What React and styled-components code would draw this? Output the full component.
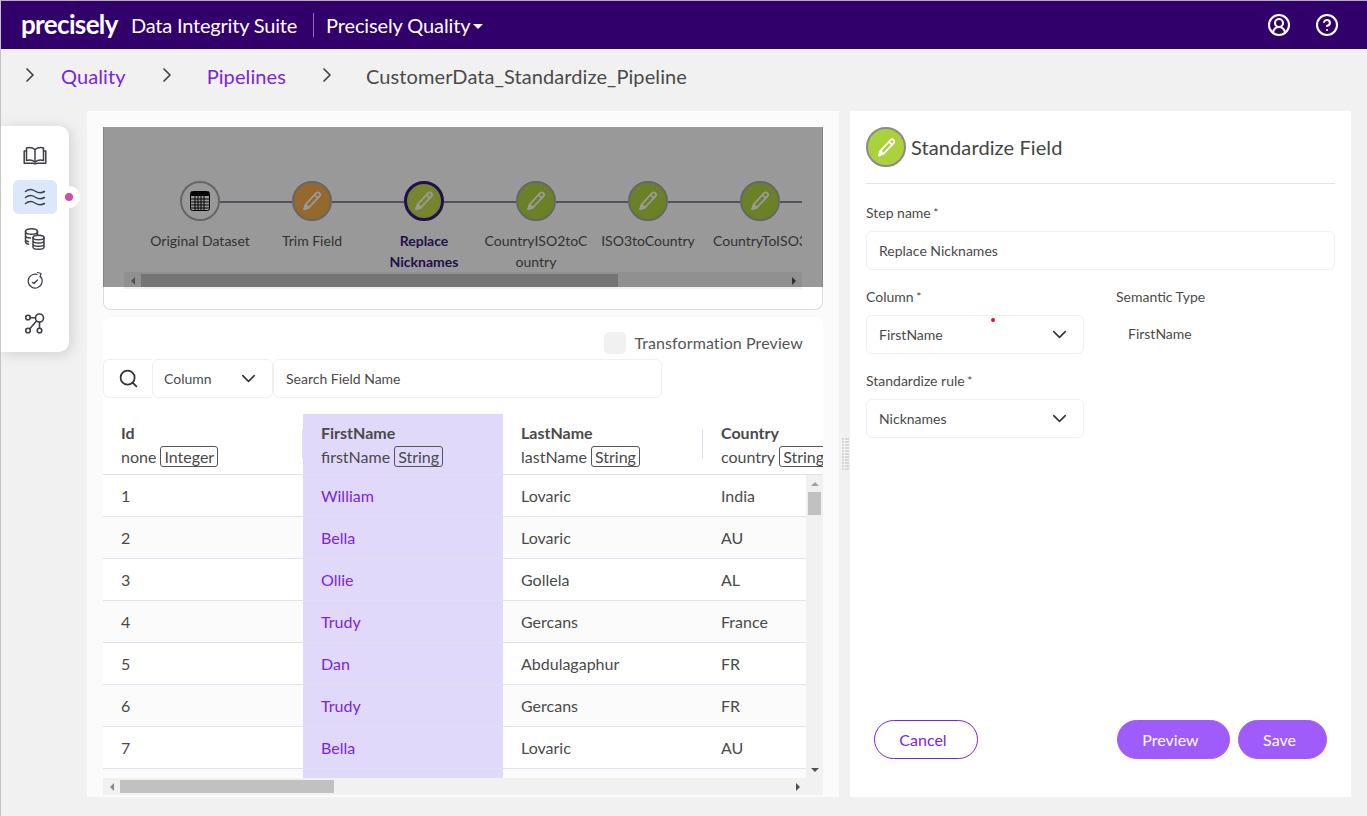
import React from "react";
import styled, { createGlobalStyle } from "styled-components";
import { ChevronDown, ChevronRight, CircleHelp, CircleUserRound, Search } from "lucide-react";

const Global = createGlobalStyle`
  html, body { margin: 0; padding: 0; height: 100%; overflow: hidden; background: #f1f1f1; }
  body { font-family: Lato, "Liberation Sans", sans-serif; color: #444; }
  * { box-sizing: border-box; }
`;

const Page = styled.div`
  position: relative;
  width: 1367px;
  height: 816px;
  display: flex;
  flex-direction: column;
  border-top: 1px solid #b4b4b4;
  border-left: 1px solid #c4c4c4;
  overflow: hidden;
`;
const Header = styled.header`
  height: 48px;
  flex: none;
  display: flex;
  align-items: center;
  background: #32006a;
  color: #fff;
  padding: 0 28px 0 20px;
`;
const Logo = styled.span`
  font-size: 26px;
  font-weight: 700;
  letter-spacing: -0.65px;
  line-height: 1;
  width: 110px;
  margin-top: -2px;
`;
const Suite = styled.span`
  font-size: 20px;
  font-weight: 400;
  line-height: 24px;
  letter-spacing: ${(p) => p.$track}px;
`;
const HeadDivider = styled.span`
  width: 1px;
  height: 24px;
  background: #8d73ad;
  margin: 0 12px 0 16px;
`;
const Caret = styled.span`
  width: 0;
  height: 0;
  margin: 3px 0 0 3px;
  border-left: 5px solid transparent;
  border-right: 5px solid transparent;
  border-top: 5px solid #fff;
`;
const HeadIcons = styled.div`
  margin-left: auto;
  display: flex;
  gap: 24px;
`;
const Breadcrumb = styled.nav`
  height: 62px;
  flex: none;
  display: flex;
  align-items: center;
  padding: 0 0 8px 17px;
  font-size: 20px;
  letter-spacing: 0.1px;
  color: #4a4a4a;
`;
const CrumbChevron = styled(ChevronRight)`
  color: #444;
  margin-right: ${(p) => p.$gap}px;
  margin-top: -2px;
`;
const CrumbLink = styled.a`
  color: #7a25dd;
  margin-right: 29px;
`;
const Main = styled.main`
  flex: 1;
  min-height: 0;
  display: flex;
  gap: 11px;
  padding: 0 15px 19px 86px;
`;
const LeftPanel = styled.section`
  width: 752px;
  display: flex;
  flex-direction: column;
  gap: 7px;
  background: #fbfbfb;
  padding: 16px 16px 2px;
`;
const FlowCard = styled.div`
  position: relative;
  height: 183px;
  flex: none;
  background: #fff;
  border: 1px solid #dcdcdc;
  border-top: none;
  border-radius: 0 0 8px 8px;
  padding: 0 20px;
`;
const FlowViewport = styled.div`
  height: 145px;
  overflow: hidden;
  display: flex;
  padding: 54px 0 0 20px;
`;
const Step = styled.div`
  width: 112px;
  flex: none;
  display: flex;
  flex-direction: column;
  align-items: center;
`;
const StepTrack = styled.div`
  width: 100%;
  display: flex;
  align-items: center;
`;
const Connector = styled.span`
  flex: 1;
  height: 2px;
  margin-top: 1px;
  background: ${(p) => (p.$hidden ? "transparent" : "#8e8696")};
`;
const Circle = styled.span`
  width: 40px;
  height: 40px;
  flex: none;
  border-radius: 50%;
  display: flex;
  align-items: center;
  justify-content: center;
  border: 2px solid ${(p) => (p.$active ? "#3a1a80" : "#aaa")};
  background: ${(p) =>
    p.$kind === "data"
      ? "#fff"
      : p.$kind === "trim"
      ? "#f8ad4a"
      : p.$active
      ? "radial-gradient(circle, #c6e04e 55%, #b0cc68 100%)"
      : "#b4d63e"};
  ${(p) => p.$active && "border-width: 3px;"}
`;
const StepLabel = styled.div`
  margin-top: 9px;
  width: 106px;
  flex: none;
  text-align: center;
  font-size: 14px;
  line-height: 21px;
  overflow-wrap: anywhere;
  color: ${(p) => (p.$active ? "#3a1a80" : "#555")};
  font-weight: ${(p) => (p.$active ? 700 : 400)};
`;
const HBar = styled.div`
  height: 17px;
  flex: none;
  display: flex;
  align-items: center;
  background: #f1f1f1;
`;
const ArrowSlot = styled.span`
  width: 17px;
  flex: none;
  display: flex;
  justify-content: center;
`;
const ArrowH = styled.span`
  width: 0;
  height: 0;
  border-top: 4px solid transparent;
  border-bottom: 4px solid transparent;
  ${(p) =>
    p.$dir === "left" ? "border-right: 4px solid #888;" : "border-left: 4px solid #505050;"}
`;
const HThumb = styled.span`
  height: 13px;
  width: ${(p) => p.$w}px;
  background: #c1c1c1;
`;
const Spacer = styled.span`
  flex: 1;
`;
const Overlay = styled.div`
  position: absolute;
  left: -1px;
  right: -1px;
  top: 0;
  height: 160px;
  background: rgba(0, 0, 0, 0.4);
`;
const TableCard = styled.div`
  flex: 1;
  min-height: 0;
  display: flex;
  flex-direction: column;
  background: #fff;
  border-radius: 8px 8px 0 0;
`;
const PreviewRow = styled.div`
  display: flex;
  justify-content: flex-end;
  align-items: center;
  gap: 8px;
  padding: 15px 20px 0 0;
  font-size: 16px;
  letter-spacing: 0.1px;
  line-height: 22px;
  color: #555;
`;
const Check = styled.span`
  width: 22px;
  height: 22px;
  border-radius: 5px;
  background: #f1f1f1;
`;
const SearchRow = styled.div`
  display: flex;
  margin-top: 5px;
  height: 39px;
  flex: none;
`;
const Boxed = styled.div`
  height: 39px;
  display: flex;
  align-items: center;
  background: #fff;
  border: 1px solid #f0f0f0;
  border-radius: 6px;
  font-size: 14px;
  color: #4a4a4a;
  width: ${(p) => p.$w}px;
  padding: 0 12px 0 ${(p) => p.$pl ?? 12}px;
  justify-content: space-between;
`;
const SearchBox = styled(Boxed)`
  padding: 0;
  justify-content: center;
  border-right: none;
  border-radius: 6px 0 0 6px;
`;
const TableHead = styled.div`
  margin-top: 16px;
  height: 61px;
  flex: none;
  display: grid;
  grid-template-columns: repeat(4, 200px);
  overflow: hidden;
  border-bottom: 1px solid #dfe1ee;
`;
const HeadCell = styled.div`
  position: relative;
  padding: 9px 0 0 18px;
  white-space: nowrap;
  background: ${(p) => (p.$hl ? "#e1d9f9" : "transparent")};
  ${(p) =>
    p.$sep &&
    `&::after { content: ""; position: absolute; right: 0; top: 15px; height: 30px; width: 1px; background: #dfe1ee; }`}
`;
const HeadTitle = styled.div`
  font-size: 16px;
  font-weight: 700;
  line-height: 20px;
  color: #4a4a4a;
`;
const HeadSub = styled.div`
  font-size: 16px;
  line-height: 21px;
  margin-top: 3px;
  color: #4a4a4a;
  display: flex;
  align-items: center;
  gap: 4px;
`;
const TypeTag = styled.span`
  border: 1px solid #555;
  border-radius: 3px;
  padding: 0 3px;
  line-height: 19px;
  height: 21px;
`;
const TableBodyWrap = styled.div`
  flex: 1;
  min-height: 0;
  display: flex;
`;
const TableBody = styled.div`
  flex: 1;
  min-width: 0;
  overflow: hidden;
`;
const Row = styled.div`
  height: 42px;
  display: grid;
  grid-template-columns: repeat(4, 200px);
  border-bottom: 1px solid #dfe1ee;
  background: ${(p) => (p.$even ? "#fbfbfb" : "#fff")};
`;
const Cell = styled.div`
  display: flex;
  align-items: center;
  padding-left: 18px;
  font-size: 16px;
  color: ${(p) => (p.$hl ? "#7a25dd" : "#4a4a4a")};
  background: ${(p) => (p.$hl ? "#e1d9f9" : "transparent")};
`;
const VBar = styled.div`
  width: 17px;
  flex: none;
  display: flex;
  flex-direction: column;
  align-items: center;
  background: #f1f1f1;
  padding-top: 7px;
  padding-bottom: 6px;
`;
const ArrowV = styled.span`
  width: 0;
  height: 0;
  flex: none;
  border-left: 4px solid transparent;
  border-right: 4px solid transparent;
  ${(p) =>
    p.$dir === "up" ? "border-bottom: 4px solid #a0a0a0;" : "border-top: 4px solid #505050;"}
`;
const VThumb = styled.span`
  width: 13px;
  height: 23px;
  margin-top: 6px;
  flex: none;
  background: #c1c1c1;
`;
const RightPanel = styled.aside`
  width: 501px;
  display: flex;
  flex-direction: column;
  background: #fff;
  padding: 16px 16px 38px;
`;
const PanelTitleRow = styled.div`
  display: flex;
  align-items: center;
  gap: 5px;
  padding-bottom: 16px;
  border-bottom: 1px solid #e3e3e3;
`;
const PanelIcon = styled.span`
  width: 40px;
  height: 40px;
  border-radius: 50%;
  background: #a9d23c;
  border: 2px solid #8a8a8a;
  display: flex;
  align-items: center;
  justify-content: center;
`;
const PanelTitle = styled.h2`
  margin: 0;
  font-size: 20px;
  font-weight: 400;
  letter-spacing: 0.1px;
  color: #444;
`;
const Field = styled.div`
  margin-top: ${(p) => p.$mt ?? 18}px;
`;
const FieldLabel = styled.label`
  display: block;
  font-size: 14px;
  line-height: 17px;
  color: #4a4a4a;
  margin-bottom: 10px;
`;
const Req = styled.span`
  font-size: 12px;
  margin-left: -1px;
  vertical-align: 1px;
`;
const FieldBox = styled.div`
  position: relative;
  height: 39px;
  display: flex;
  align-items: center;
  justify-content: space-between;
  border: 1px solid #f0f0f0;
  border-radius: 6px;
  padding: 0 12px;
  font-size: 14px;
  color: #4a4a4a;
`;
const RedDot = styled.span`
  position: absolute;
  left: 124px;
  top: 2px;
  width: 4px;
  height: 4px;
  border-radius: 50%;
  background: #e0102a;
`;
const TwoCols = styled.div`
  display: grid;
  grid-template-columns: 218px 1fr;
  column-gap: 32px;
`;
const PlainValue = styled.div`
  height: 39px;
  display: flex;
  align-items: center;
  padding: 0 0 2px 12px;
  font-size: 14px;
  color: #4a4a4a;
`;
const Actions = styled.div`
  margin-top: auto;
  display: flex;
  gap: 8px;
  padding: 0 8px;
`;
const Button = styled.button`
  height: 39px;
  width: ${(p) => p.$w}px;
  margin-right: ${(p) => (p.$push ? "auto" : "0")};
  padding: 0 6px 0 0;
  border-radius: 20px;
  font: 400 16px Lato, "Liberation Sans", sans-serif;
  border: 1px solid #7a25dd;
  background: ${(p) => (p.$outline ? "#fff" : "#a05cfa")};
  border-color: ${(p) => (p.$outline ? "#7a25dd" : "#a05cfa")};
  color: ${(p) => (p.$outline ? "#7a25dd" : "#fff")};
`;
const Rail = styled.div`
  position: absolute;
  left: 0;
  top: 125px;
  width: 68px;
  height: 226px;
  background: #fff;
  border-radius: 0 10px 10px 0;
  box-shadow: 2px 2px 14px rgba(0, 0, 0, 0.14);
  display: flex;
  flex-direction: column;
  align-items: center;
  padding: 8px 0 0 0;
  gap: 1px;
`;
const RailItem = styled.span`
  width: 44px;
  height: ${(p) => (p.$active ? 34 : 41)}px;
  margin: ${(p) => (p.$active ? "4px 0 3px" : "0")};
  display: flex;
  align-items: center;
  justify-content: center;
  border-radius: 6px;
  background: ${(p) => (p.$active ? "#dbe7fb" : "transparent")};
`;
const RailBump = styled.span`
  position: absolute;
  left: 57px;
  top: 60px;
  width: 22px;
  height: 22px;
  border-radius: 50%;
  background: #fff;
  display: flex;
  align-items: center;
  justify-content: center;
`;
const RailDot = styled.span`
  width: 8px;
  height: 8px;
  border-radius: 50%;
  background: #d04ea6;
`;
const Grip = styled.div`
  position: absolute;
  left: 841px;
  top: 437px;
  display: grid;
  grid-template-columns: repeat(3, 2px);
  grid-auto-rows: 2px;
  gap: 1px 0.5px;
`;
const GripDot = styled.span`
  background: #d8d8d8;
`;

const Pencil = ({ size = 22, color = "#fff" }) => (
  <svg width={size} height={size} viewBox="0 0 24 24" fill="none" stroke={color} strokeWidth="2" strokeLinejoin="round">
    <path d="M16.5 3.5a2.3 2.3 0 0 1 3.6 3.4L8.5 19.2 3.5 21l1.6-5.2z" />
    <path d="M15 5.5l3.4 3.3" />
    <path d="M3.5 21l1.6-5.2 3.4 3.4z" fill={color} />
  </svg>
);
const TableGlyph = () => (
  <svg width="20" height="20" viewBox="0 0 20 20">
    <rect x="0.5" y="0.5" width="19" height="19" rx="2" fill="#fff" stroke="#000" />
    <rect x="1" y="1" width="18" height="4" fill="#000" />
    {[8, 11, 14, 17].map((y) => <path key={y} d={`M1 ${y}h18`} stroke="#000" strokeWidth="1" />)}
    {[5, 8, 11, 14].map((x) => <path key={x} d={`M${x} 5v14`} stroke="#000" strokeWidth="1" />)}
  </svg>
);
const railStroke = { fill: "none", stroke: "#3f3f46", strokeWidth: 1.5, strokeLinecap: "round", strokeLinejoin: "round" };
const BookIcon = () => (
  <svg width="24" height="24" viewBox="0 0 24 24" {...railStroke}>
    <path d="M12 6.5C9.5 4.5 6 4.2 3.5 5v12.5c2.5-.8 6-.5 8.5 1.5 2.5-2 6-2.3 8.5-1.5V5c-2.5-.8-6-.5-8.5 1.5z" />
    <path d="M12 6.5V19" />
    <path d="M3.5 8H1.2v12.3h8.6c.8 0 1.2.5 2.2.5s1.4-.5 2.2-.5h8.6V8h-2.3" />
  </svg>
);
const WavesIcon = () => (
  <svg width="24" height="24" viewBox="0 0 24 24" {...railStroke}>
    <path d="M2.5 6.5C6 3.5 9 4 12 6s6 2.500 9.500.5" />
    <path d="M2.500 12.500C6 9.500 9 10 12 12s6 2.500 9.500.5" />
    <path d="M2.500 18.500C6 15.500 9 16 12 18s6 2.500 9.500.5" />
  </svg>
);
const DbIcon = () => (
  <svg width="24" height="24" viewBox="0 0 24 24" {...railStroke}>
    <ellipse cx="8.500" cy="4.500" rx="6" ry="2.800" />
    <path d="M2.500 4.500V15c0 1 1.200 1.800 3 2.200M2.500 8.500c0 1.200 2 2.300 5 2.500M2.500 12.500c0 1 1.200 1.800 3 2.200M14.500 4.500V8" />
    <ellipse cx="15.500" cy="10.500" rx="5.500" ry="2.300" fill="#fff" />
    <path d="M10 10.500v9.500c0 1.300 2.500 2.300 5.500 2.300s5.500-1 5.500-2.300v-9.500M10 13.700c0 1.300 2.500 2.300 5.500 2.300s5.500-1 5.500-2.300M10 16.900c0 1.300 2.500 2.300 5.500 2.300s5.500-1 5.500-2.300" />
  </svg>
);
const GaugeIcon = () => (
  <svg width="24" height="24" viewBox="0 0 24 24" {...railStroke} strokeWidth="1.200">
    <path d="M17.500 7.500A7 7 0 1 1 14 5.300" />
    <path d="M14.500 3.500l3.500 1-1 3.500" />
    <path d="M9.500 13.500l1.500 1 3.500-3.500" strokeWidth="1.400" />
  </svg>
);
const NetworkIcon = () => (
  <svg width="24" height="24" viewBox="0 0 24 24" {...railStroke} strokeWidth="1.600">
    <circle cx="16.500" cy="7" r="4" />
    <circle cx="5" cy="6.500" r="2.300" />
    <circle cx="5" cy="19.500" r="2.300" />
    <circle cx="16.500" cy="19.500" r="2.300" />
    <path d="M7.300 6.700h5.200M13.500 10L6.800 17.800M16.500 11v6.200" />
  </svg>
);

const steps = [
  { label: "Original Dataset", kind: "data" },
  { label: "Trim Field", kind: "trim" },
  { label: "Replace Nicknames", kind: "std", active: true },
  { label: "CountryISO2toCountry", kind: "std" },
  { label: "ISO3toCountry", kind: "std" },
  { label: "CountryToISO3", kind: "std" },
];
const columns = [
  { title: "Id", sub: "none", type: "Integer", sep: true },
  { title: "FirstName", sub: "firstName", type: "String", hl: true },
  { title: "LastName", sub: "lastName", type: "String", sep: true },
  { title: "Country", sub: "country", type: "String" },
];
const rows = [
  ["1", "William", "Lovaric", "India"],
  ["2", "Bella", "Lovaric", "AU"],
  ["3", "Ollie", "Gollela", "AL"],
  ["4", "Trudy", "Gercans", "France"],
  ["5", "Dan", "Abdulagaphur", "FR"],
  ["6", "Trudy", "Gercans", "FR"],
  ["7", "Bella", "Lovaric", "AU"],
  ["", "", "", ""],
];

export default function App() {
  return (
    <Page>
      <Global />
      <Header>
        <Logo>precisely</Logo>
        <Suite $track={-0.2}>Data Integrity Suite</Suite>
        <HeadDivider />
        <Suite $track={-0.12}>Precisely Quality</Suite>
        <Caret />
        <HeadIcons>
          <CircleUserRound size={24} strokeWidth={2.1} />
          <CircleHelp size={24} strokeWidth={2.1} />
        </HeadIcons>
      </Header>
      <Breadcrumb>
        <CrumbChevron size={24} strokeWidth={1.7} $gap={19} />
        <CrumbLink>Quality</CrumbLink>
        <CrumbChevron size={24} strokeWidth={1.7} $gap={28} />
        <CrumbLink>Pipelines</CrumbLink>
        <CrumbChevron size={24} strokeWidth={1.7} $gap={27} />
        <span>CustomerData_Standardize_Pipeline</span>
      </Breadcrumb>
      <Main>
        <LeftPanel>
          <FlowCard>
            <FlowViewport>
              {steps.map((s, i) => (
                <Step key={s.label}>
                  <StepTrack>
                    <Connector $hidden={i === 0} />
                    <Circle $kind={s.kind} $active={s.active}>
                      {s.kind === "data" ? <TableGlyph /> : <Pencil />}
                    </Circle>
                    <Connector />
                  </StepTrack>
                  <StepLabel $active={s.active}>{s.label}</StepLabel>
                </Step>
              ))}
            </FlowViewport>
            <HBar>
              <ArrowSlot><ArrowH $dir="left" /></ArrowSlot>
              <HThumb $w={477} />
              <Spacer />
              <ArrowSlot><ArrowH $dir="right" /></ArrowSlot>
            </HBar>
            <Overlay />
          </FlowCard>
          <TableCard>
            <PreviewRow>
              <Check />
              <span>Transformation Preview</span>
            </PreviewRow>
            <SearchRow>
              <SearchBox $w={49}>
                <Search size={21} color="#333" strokeWidth={2} />
              </SearchBox>
              <Boxed $w={121} $pl={11}>
                <span>Column</span>
                <ChevronDown size={23} strokeWidth={1.6} color="#333" />
              </Boxed>
              <Boxed $w={389}>Search Field Name</Boxed>
            </SearchRow>
            <TableHead>
              {columns.map((c) => (
                <HeadCell key={c.title} $hl={c.hl} $sep={c.sep}>
                  <HeadTitle>{c.title}</HeadTitle>
                  <HeadSub>
                    {c.sub}
                    <TypeTag>{c.type}</TypeTag>
                  </HeadSub>
                </HeadCell>
              ))}
            </TableHead>
            <TableBodyWrap>
              <TableBody>
                {rows.map((r, i) => (
                  <Row key={i} $even={i % 2 === 1}>
                    {r.map((v, j) => (
                      <Cell key={j} $hl={j === 1}>{v}</Cell>
                    ))}
                  </Row>
                ))}
              </TableBody>
              <VBar>
                <ArrowV $dir="up" />
                <VThumb />
                <Spacer />
                <ArrowV $dir="down" />
              </VBar>
            </TableBodyWrap>
            <HBar>
              <ArrowSlot><ArrowH $dir="left" /></ArrowSlot>
              <HThumb $w={214} />
              <Spacer />
              <ArrowSlot><ArrowH $dir="right" /></ArrowSlot>
              <ArrowSlot />
            </HBar>
          </TableCard>
        </LeftPanel>
        <RightPanel>
          <PanelTitleRow>
            <PanelIcon><Pencil size={21} /></PanelIcon>
            <PanelTitle>Standardize Field</PanelTitle>
          </PanelTitleRow>
          <Field $mt={20}>
            <FieldLabel>Step name <Req>*</Req></FieldLabel>
            <FieldBox>Replace Nicknames</FieldBox>
          </Field>
          <TwoCols>
            <Field>
              <FieldLabel>Column <Req>*</Req></FieldLabel>
              <FieldBox>
                <span>FirstName</span>
                <RedDot />
                <ChevronDown size={23} strokeWidth={1.6} color="#333" />
              </FieldBox>
            </Field>
            <Field>
              <FieldLabel>Semantic Type</FieldLabel>
              <PlainValue>FirstName</PlainValue>
            </Field>
          </TwoCols>
          <TwoCols>
            <Field>
              <FieldLabel>Standardize rule <Req>*</Req></FieldLabel>
              <FieldBox>
                <span>Nicknames</span>
                <ChevronDown size={23} strokeWidth={1.6} color="#333" />
              </FieldBox>
            </Field>
          </TwoCols>
          <Actions>
            <Button $outline $w={104} $push>Cancel</Button>
            <Button $w={113}>Preview</Button>
            <Button $w={89}>Save</Button>
          </Actions>
        </RightPanel>
      </Main>
      <Rail>
        <RailItem><BookIcon /></RailItem>
        <RailItem $active><WavesIcon /></RailItem>
        <RailItem><DbIcon /></RailItem>
        <RailItem><GaugeIcon /></RailItem>
        <RailItem><NetworkIcon /></RailItem>
        <RailBump><RailDot /></RailBump>
      </Rail>
      <Grip>
        {Array.from({ length: 33 }, (_, i) => <GripDot key={i} />)}
      </Grip>
    </Page>
  );
}
